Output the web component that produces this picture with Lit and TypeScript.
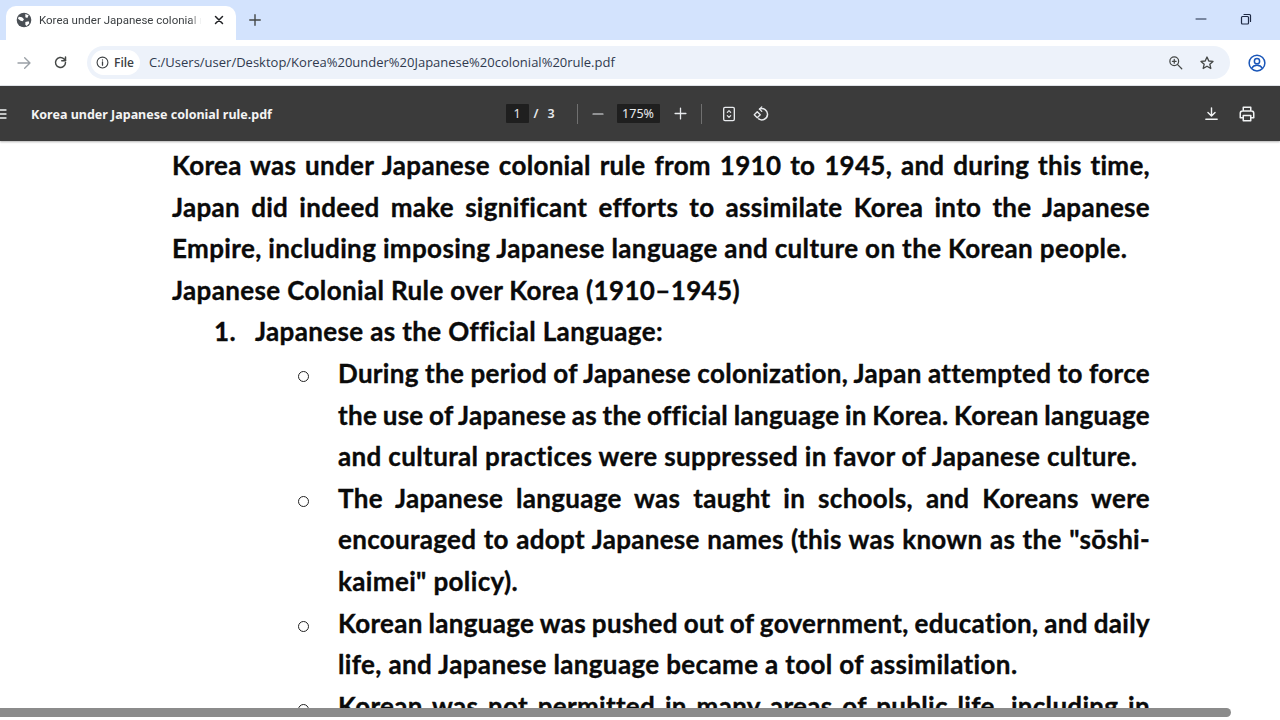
import { LitElement, html, css, svg } from "lit";
import { customElement } from "lit/decorators.js";

type Line = { t: string; j?: boolean };
type Block = { kind: "p" | "num" | "bul"; marker?: string; lines: Line[] };

const BLOCKS: Block[] = [
  { kind: "p", lines: [
    { t: "Korea was under Japanese colonial rule from 1910 to 1945, and during this time,", j: true },
    { t: "Japan did indeed make significant efforts to assimilate Korea into the Japanese", j: true },
    { t: "Empire, including imposing Japanese language and culture on the Korean people." },
    { t: "Japanese Colonial Rule over Korea (1910–1945)" },
  ]},
  { kind: "num", marker: "1.", lines: [{ t: "Japanese as the Official Language:" }] },
  { kind: "bul", marker: "○", lines: [
    { t: "During the period of Japanese colonization, Japan attempted to force", j: true },
    { t: "the use of Japanese as the official language in Korea. Korean language", j: true },
    { t: "and cultural practices were suppressed in favor of Japanese culture." },
  ]},
  { kind: "bul", marker: "○", lines: [
    { t: "The Japanese language was taught in schools, and Koreans were", j: true },
    { t: "encouraged to adopt Japanese names (this was known as the \"sōshi-", j: true },
    { t: "kaimei\" policy)." },
  ]},
  { kind: "bul", marker: "○", lines: [
    { t: "Korean language was pushed out of government, education, and daily", j: true },
    { t: "life, and Japanese language became a tool of assimilation." },
  ]},
  { kind: "bul", marker: "○", lines: [
    { t: "Korean was not permitted in many areas of public life, including in", j: true },
  ]},
];

const icon = (w: number, body: unknown, cls = "") => html`<svg class=${cls} width=${w} height=${w} viewBox="0 0 24 24" fill="none" stroke="currentColor" stroke-width="2" stroke-linecap="round" stroke-linejoin="round">${body}</svg>`;

@customElement("app-root")
export class AppRoot extends LitElement {
  static styles = css`
    :host { display: block; width: 1280px; height: 720px; overflow: hidden; position: relative; background: #fff; font-family: "Noto Sans", "Open Sans", sans-serif; }
    .frame { display: flex; flex-direction: column; height: 720px; }
    .strip { height: 40px; flex: none; background: #d3e3fd; display: flex; align-items: flex-end; padding-left: 6px; color: #1f2937; }
    .tab { width: 230px; height: 34px; background: #fff; border-radius: 10px 10px 0 0; display: flex; align-items: center; padding: 0 10px 6px; box-sizing: border-box; gap: 7px; }
    .tab-title { font-size: 11.5px; color: #3c4043; white-space: nowrap; overflow: hidden; width: 164px; flex: none; font-family: "Roboto", sans-serif; -webkit-mask-image: linear-gradient(90deg, #000 92%, transparent 99%); mask-image: linear-gradient(90deg, #000 92%, transparent 99%); }
    .tab-x { margin-left: 3px; color: #202124; display: flex; }
    .new { margin-left: 12px; margin-bottom: 13px; display: flex; color: #444746; }
    .spacer { flex: 1; }
    .win { display: flex; align-items: center; gap: 33px; padding-right: 28px; margin-bottom: 15px; color: #1f2a44; }
    .nav { height: 46px; flex: none; background: #fff; display: flex; align-items: center; box-sizing: border-box; border-bottom: 1px solid #e4e7ec; }
    .nav-ic { display: flex; }
    .back { margin-left: 16px; color: #9aa0a6; }
    .reload { margin-left: 21px; color: #444746; }
    .omni { margin-left: 19px; width: 1143px; height: 33px; border-radius: 17px; background: #edf2fa; display: flex; align-items: center; box-sizing: border-box; padding-left: 4px; }
    .chip { height: 25px; width: 49px; background: #fff; border-radius: 13px; display: flex; align-items: center; gap: 5px; padding-left: 5px; box-sizing: border-box; font-size: 12px; font-weight: 600; color: #3c4043; font-family: "Open Sans", sans-serif; flex: none; }
    .url { margin-left: 9px; padding-bottom: 2px; font-size: 13px; color: #303a4f; white-space: nowrap; font-family: "Open Sans", sans-serif; flex: 1; }
    .omni-ic { display: flex; color: #444746; margin-right: 16px; }
    .omni-ic.star { margin-right: 15px; margin-left: 0; }
    .acct { display: flex; margin-left: 18px; color: #1a56b8; }
    .pdf { height: 55px; flex: none; background: #3b3b3b; color: #f1f3f4; display: grid; grid-template-columns: 1fr auto 1fr; align-items: center; box-shadow: 0 1px 2px rgba(0,0,0,.3); position: relative; }
    .pdf-l { display: flex; align-items: center; }
    .menu { display: flex; margin-left: -8px; }
    .pdf-title { margin-left: 23px; padding-top: 2px; font-size: 12.5px; font-weight: 700; color: #f4f4f4; white-space: nowrap; }
    .pdf-c { display: flex; align-items: center; font-size: 12.5px; color: #e8eaed; margin-left: -5px; }
    .field { background: #1f1f1f; height: 19px; display: flex; align-items: center; justify-content: center; border-radius: 1px; }
    .page { width: 23px; }
    .zoom { width: 43px; }
    .sep { width: 1px; height: 20px; background: #707070; }
    .ofs { display: flex; gap: 9px; margin-left: 5px; width: 43px; font-weight: 600; }
    .pdf-r { display: flex; justify-content: flex-end; align-items: center; gap: 18px; padding-right: 24px; }
    .doc { flex: 1; min-height: 0; overflow: hidden; padding: 4px 130px 0 172px; box-sizing: border-box; color: #0a0a0a; font-family: "Lato", sans-serif; font-size: 26px; font-weight: 700; line-height: 41.6px; letter-spacing: 0.36px; font-variant-ligatures: none; -webkit-text-stroke: 0.35px #0a0a0a; }
    .line { white-space: nowrap; height: 41.6px; }
    .line.j { white-space: normal; text-align: justify; text-align-last: justify; word-spacing: -3px; letter-spacing: 0.3px; }
    .row { display: grid; }
    .row.num { grid-template-columns: 41px 1fr; padding-left: 42px; }
    .row.bul { grid-template-columns: 40px 1fr; padding-left: 126px; }
    .bullet { width: 11px; height: 11px; border: 1.3px solid #222; border-radius: 50%; box-sizing: border-box; margin-top: 18px; }
    .scroll { position: absolute; left: 0; top: 708px; width: 1231px; height: 9px; background: #8b8b8b; border-radius: 0 5px 5px 0; }
    .below { position: absolute; left: 0; top: 717px; width: 1280px; height: 3px; background: #fff; }
  `;

  render() {
    return html`<div class="frame">
      <div class="strip">
        <div class="tab">
          ${icon(16, svg`<circle cx="12" cy="12" r="11" fill="#4a4f55" stroke="none"/><path d="M4 7l5 1 3 3-2 3-3-1-4-3zM14 3l5 2-2 4-3-1zM14 15l5-1 1 3-4 4-2-2z" fill="#fff" stroke="none"/>`)}
          <span class="tab-title">Korea under Japanese colonial rule.pdf</span>
          <span class="tab-x">${icon(12, svg`<path d="M5 5l14 14M19 5L5 19" stroke-width="3"/>`)}</span>
        </div>
        <span class="new">${icon(14, svg`<path d="M12 3v18M3 12h18" stroke-width="2.4"/>`)}</span>
        <span class="spacer"></span>
        <div class="win">
          ${icon(12, svg`<path d="M2 12h20" stroke-width="2"/>`)}
          ${icon(12, svg`<rect x="3" y="7" width="14" height="15" rx="2" stroke-width="2.4"/><path d="M8 3h11a2 2 0 0 1 2 2v12" stroke-width="2.4"/>`)}
        </div>
      </div>
      <div class="nav">
        <span class="nav-ic back">${icon(16, svg`<path d="M3 12h18M13 4l8 8-8 8"/>`)}</span>
        <span class="nav-ic reload">${icon(15, svg`<path d="M20 12a8 8 0 1 1-2.500-5.800L20 8.500" stroke-width="2.400"/><path d="M20 3v6h-6" stroke-width="2.400"/>`)}</span>
        <div class="omni">
          <div class="chip">
            ${icon(13, svg`<circle cx="12" cy="12" r="10"/><path d="M12 11v6M12 7v.5" stroke-width="2.400"/>`)}
            <span>File</span>
          </div>
          <span class="url">C:/Users/user/Desktop/Korea%20under%20Japanese%20colonial%20rule.pdf</span>
          <span class="omni-ic">${icon(15, svg`<circle cx="10" cy="10" r="7"/><path d="M15 15l7 7M10 7v6M7 10h6"/>`)}</span>
          <span class="omni-ic star">${icon(16, svg`<path d="M12 3l2.700 6 6.300.6-4.800 4.200 1.500 6.400L12 16.800 6.300 20.200l1.500-6.400L3 9.600 9.300 9z"/>`)}</span>
        </div>
        <span class="acct">${icon(18, svg`<circle cx="12" cy="12" r="10.500"/><circle cx="12" cy="9.500" r="3.500"/><path d="M5 19c1.500-3 4-4 7-4s5.500 1 7 4"/>`)}</span>
      </div>
      <div class="pdf">
        <div class="pdf-l">
          <span class="menu">${icon(16, svg`<path d="M3 6h18M3 12h18M3 18h18"/>`)}</span>
          <span class="pdf-title">Korea under Japanese colonial rule.pdf</span>
        </div>
        <div class="pdf-c">
          <span class="field page">1</span>
          <span class="ofs"><span>/</span><span>3</span></span>
          <span class="sep"></span>
          <span style="width:14px"></span>
          ${icon(12, svg`<path d="M2 12h20" stroke-width="2.400"/>`)}
          <span style="width:13px"></span>
          <span class="field zoom">175%</span>
          <span style="width:14px"></span>
          ${icon(13, svg`<path d="M12 2v20M2 12h20" stroke-width="2.400"/>`)}
          <span style="width:14px"></span>
          <span class="sep"></span>
          <span style="width:19px"></span>
          ${icon(16, svg`<rect x="4" y="2" width="16" height="20" rx="2"/><path d="M9.500 9.500L12 7l2.500 2.500M9.500 14.500L12 17l2.500-2.500" stroke-width="1.800"/>`)}
          <span style="width:15px"></span>
          ${icon(18, svg`<path d="M10 5.500a7.500 7.500 0 1 1-1 13" /><path d="M13 2.500l-3 3 3 3" stroke-width="1.800"/><path d="M7 9l4 4-4 4-4-4z" stroke-width="1.800"/>`)}
        </div>
        <div class="pdf-r">
          ${icon(17, svg`<path d="M12 4v11M7 10.500l5 5 5-5M4 20h16"/>`)}
          ${icon(18, svg`<path d="M7 8V3h10v5M7 17H3v-6a3 3 0 0 1 3-3h12a3 3 0 0 1 3 3v6h-4"/><rect x="7" y="14" width="10" height="7"/>`)}
        </div>
      </div>
      <div class="doc">
        ${BLOCKS.map((b) => b.kind === "p"
          ? b.lines.map((l) => html`<div class=${l.j ? "line j" : "line"}>${l.t}</div>`)
          : html`<div class="row ${b.kind}">
              ${b.kind === "num" ? html`<span>${b.marker}</span>` : html`<span class="bullet"></span>`}
              <div>${b.lines.map((l) => html`<div class=${l.j ? "line j" : "line"}>${l.t}</div>`)}</div>
            </div>`)}
      </div>
    </div>
    <div class="scroll"></div>
    <div class="below"></div>`;
  }
}
